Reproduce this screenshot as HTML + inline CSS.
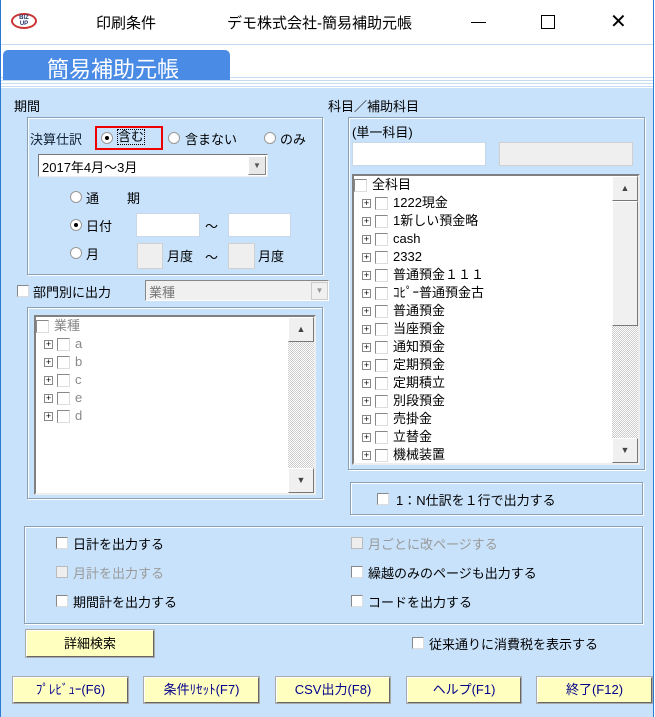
<!DOCTYPE html><html><head><meta charset="utf-8"><style>
*{box-sizing:border-box;margin:0;padding:0}
body{width:655px;height:717px;overflow:hidden;background:#fff;font-family:"Liberation Sans","Noto Sans CJK JP",sans-serif;font-size:13px;color:#000;position:relative}
.a{position:absolute;white-space:nowrap}
.box{position:absolute;border:1px solid #8aa0b4;box-shadow:inset 1px 1px 0 #fff,1px 1px 0 #fff}
.in{position:absolute;background:#fff;border:1px solid #c8d8e8}
.gr{position:absolute;background:#efefef;border:1px solid #d0d0d0}
.cb{position:absolute;width:12px;height:12px;background:#fff;border:1px solid #888;border-right-color:#ddd;border-bottom-color:#ddd}
.rd{position:absolute;width:12px;height:12px;border-radius:50%;background:#fff;border:1px solid #999}
.rd.on::after{content:"";position:absolute;left:3px;top:3px;width:4px;height:4px;border-radius:50%;background:#000}
.list{position:absolute;background:#fff;border:2px solid #808080;border-right-color:#eee;border-bottom-color:#eee;overflow:hidden}
.sb{position:absolute;top:0;bottom:0;width:26px;right:0;background:repeating-conic-gradient(#ccc 0 25%,#fff 0 50%) 0 0/2px 2px}
.btn2{position:absolute;left:0;width:26px;background:#f0f0f0;border:1px solid #fff;border-right-color:#777;border-bottom-color:#777}
.tr{position:absolute;left:0;font-size:13px;height:18px;line-height:18px}
.pl{display:inline-block;width:9px;height:9px;border:1px solid #888;font-size:9px;line-height:7px;text-align:center;vertical-align:middle;margin-left:8px;background:#fff;color:#000}
.sq{display:inline-block;width:13px;height:13px;border:1px solid #888;border-right-color:#ddd;border-bottom-color:#ddd;vertical-align:middle;margin:0 5px 0 4px}
.yb{position:absolute;background:#ffffc0;border:1px solid #fff;border-right-color:#666;border-bottom-color:#666;box-shadow:0 0 0 1px #aaa;text-align:center;font-size:13px;color:#00008b}
</style></head><body>
<div class="a" style="left:0;top:0;width:1px;height:717px;background:#2b7bd6"></div>
<div class="a" style="right:1px;top:0;width:1px;height:717px;background:#2b7bd6"></div>
<div class="a" style="left:11px;top:13px;width:26px;height:16px;border-radius:50%;border:2px solid #c33;font-size:6px;font-weight:bold;color:#236;text-align:center;line-height:6px;padding-top:0">BIZ<br>UP</div>
<div class="a" style="left:96px;top:12px;font-size:15px">印刷条件</div>
<div class="a" style="left:227px;top:12px;font-size:15px">デモ株式会社-簡易補助元帳</div>
<div class="a" style="left:471px;top:22px;width:15px;height:1px;background:#000"></div>
<div class="a" style="left:541px;top:15px;width:14px;height:14px;border:1px solid #000"></div>
<div class="a" style="left:610px;top:13px;font-size:20px;line-height:18px">✕</div>
<div class="a" style="left:1px;top:44px;width:652px;height:1px;background:#c4dcf4"></div>
<div class="a" style="left:1px;top:77px;width:652px;height:11px;background:repeating-linear-gradient(#c4dcf4 0 1px,#fff 1px 3px)"></div>
<div class="a" style="left:3px;top:50px;width:227px;height:30px;background:#4a8be6;border-radius:5px 5px 0 0"></div>
<div class="a" style="left:47px;top:52px;font-size:22px;color:#fff">簡易補助元帳</div>
<div class="a" style="left:1px;top:88px;width:652px;height:629px;background:#c8e2fb"></div>

<div class="a" style="left:14px;top:96px">期間</div>
<div class="box" style="left:27px;top:117px;width:296px;height:158px"></div>
<div class="a" style="left:30px;top:129px;color:#123">決算仕訳</div>
<div class="a" style="left:95px;top:126px;width:68px;height:24px;border:2px solid #e00"></div>
<div class="rd on" style="left:101px;top:132px"></div>
<div class="a" style="left:117px;top:129px;border:1px dotted #000;line-height:14px">含む</div>
<div class="rd" style="left:168px;top:132px"></div><div class="a" style="left:185px;top:129px">含まない</div>
<div class="rd" style="left:264px;top:132px"></div><div class="a" style="left:280px;top:129px">のみ</div>
<div class="a" style="left:38px;top:154px;width:230px;height:23px;background:#fff;border:1px solid #777;border-right-color:#eee;border-bottom-color:#eee;padding:2px 3px;font-size:13px">2017年4月～3月</div>
<div class="a" style="left:248px;top:156px;width:18px;height:19px;background:#e8e8e8;border:1px solid #fff;border-right-color:#888;border-bottom-color:#888;font-size:8px;text-align:center;line-height:17px;color:#555">▼</div>
<div class="rd" style="left:70px;top:191px"></div><div class="a" style="left:86px;top:188px">通</div><div class="a" style="left:127px;top:188px">期</div>
<div class="rd on" style="left:70px;top:219px"></div><div class="a" style="left:86px;top:216px">日付</div>
<div class="in" style="left:136px;top:213px;width:64px;height:24px"></div>
<div class="a" style="left:205px;top:216px">～</div>
<div class="in" style="left:228px;top:213px;width:63px;height:24px"></div>
<div class="rd" style="left:70px;top:247px"></div><div class="a" style="left:86px;top:244px">月</div>
<div class="gr" style="left:137px;top:243px;width:26px;height:26px"></div><div class="a" style="left:167px;top:246px">月度</div>
<div class="a" style="left:205px;top:247px">～</div>
<div class="gr" style="left:228px;top:243px;width:27px;height:26px"></div><div class="a" style="left:258px;top:246px">月度</div>

<div class="cb" style="left:17px;top:285px"></div><div class="a" style="left:33px;top:282px">部門別に出力</div>
<div class="a" style="left:145px;top:280px;width:184px;height:21px;background:#f0f0f0;border:1px solid #888;border-right-color:#fff;border-bottom-color:#fff;color:#777;padding:1px 3px">業種</div>
<div class="a" style="left:311px;top:282px;width:17px;height:18px;border:1px solid #ccc;font-size:8px;color:#999;text-align:center;line-height:16px">▼</div>
<div class="box" style="left:27px;top:307px;width:296px;height:192px"></div>
<div class="list" style="left:34px;top:315px;width:282px;height:180px;color:#888">
<div class="sb"><div class="btn2" style="top:0;height:25px;font-size:9px;text-align:center;line-height:22px;color:#444">▲</div><div class="btn2" style="bottom:0;height:25px;font-size:9px;text-align:center;line-height:22px;color:#444">▼</div></div>
<div class="tr" style="top:0"><span class="sq" style="margin-left:0">&nbsp;</span>業種</div>
<div class="tr" style="top:18px"><span class="pl">+</span><span class="sq"></span>a</div>
<div class="tr" style="top:36px"><span class="pl">+</span><span class="sq"></span>b</div>
<div class="tr" style="top:54px"><span class="pl">+</span><span class="sq"></span>c</div>
<div class="tr" style="top:72px"><span class="pl">+</span><span class="sq"></span>e</div>
<div class="tr" style="top:90px"><span class="pl">+</span><span class="sq"></span>d</div>
</div>

<div class="a" style="left:328px;top:96px">科目／補助科目</div>
<div class="box" style="left:348px;top:117px;width:297px;height:353px"></div>
<div class="a" style="left:352px;top:122px">(単一科目)</div>
<div class="in" style="left:352px;top:142px;width:134px;height:24px"></div>
<div class="gr" style="left:499px;top:142px;width:134px;height:24px"></div>
<div class="list" style="left:352px;top:174px;width:288px;height:291px">
<div class="sb"><div class="btn2" style="top:0;height:25px;font-size:9px;text-align:center;line-height:22px;color:#444">▲</div><div class="btn2" style="top:25px;height:125px"></div><div class="btn2" style="bottom:0;height:25px;font-size:9px;text-align:center;line-height:22px;color:#444">▼</div></div>
<div class="tr" style="top:0"><span class="sq" style="margin-left:0"></span>全科目</div>
<div class="tr" style="top:18px"><span class="pl">+</span><span class="sq"></span>1222現金</div>
<div class="tr" style="top:36px"><span class="pl">+</span><span class="sq"></span>1新しい預金略</div>
<div class="tr" style="top:54px"><span class="pl">+</span><span class="sq"></span>cash</div>
<div class="tr" style="top:72px"><span class="pl">+</span><span class="sq"></span>2332</div>
<div class="tr" style="top:90px"><span class="pl">+</span><span class="sq"></span>普通預金１１１</div>
<div class="tr" style="top:108px"><span class="pl">+</span><span class="sq"></span>ｺﾋﾟｰ普通預金古</div>
<div class="tr" style="top:126px"><span class="pl">+</span><span class="sq"></span>普通預金</div>
<div class="tr" style="top:144px"><span class="pl">+</span><span class="sq"></span>当座預金</div>
<div class="tr" style="top:162px"><span class="pl">+</span><span class="sq"></span>通知預金</div>
<div class="tr" style="top:180px"><span class="pl">+</span><span class="sq"></span>定期預金</div>
<div class="tr" style="top:198px"><span class="pl">+</span><span class="sq"></span>定期積立</div>
<div class="tr" style="top:216px"><span class="pl">+</span><span class="sq"></span>別段預金</div>
<div class="tr" style="top:234px"><span class="pl">+</span><span class="sq"></span>売掛金</div>
<div class="tr" style="top:252px"><span class="pl">+</span><span class="sq"></span>立替金</div>
<div class="tr" style="top:270px"><span class="pl">+</span><span class="sq"></span>機械装置</div>
</div>
<div class="box" style="left:350px;top:482px;width:293px;height:33px"></div>
<div class="cb" style="left:377px;top:493px"></div><div class="a" style="left:396px;top:490px">1：N仕訳を１行で出力する</div>

<div class="box" style="left:24px;top:526px;width:619px;height:98px"></div>
<div class="cb" style="left:56px;top:537px"></div><div class="a" style="left:73px;top:534px">日計を出力する</div>
<div class="cb" style="left:56px;top:566px;background:#eee;border-color:#bbb"></div><div class="a" style="left:73px;top:563px;color:#999">月計を出力する</div>
<div class="cb" style="left:56px;top:595px"></div><div class="a" style="left:73px;top:592px">期間計を出力する</div>
<div class="cb" style="left:351px;top:537px;background:#eee;border-color:#bbb"></div><div class="a" style="left:368px;top:534px;color:#999">月ごとに改ページする</div>
<div class="cb" style="left:351px;top:566px"></div><div class="a" style="left:368px;top:563px">繰越のみのページも出力する</div>
<div class="cb" style="left:351px;top:595px"></div><div class="a" style="left:368px;top:592px">コードを出力する</div>
<div class="yb" style="left:26px;top:630px;width:128px;height:27px;line-height:25px;color:#000">詳細検索</div>
<div class="cb" style="left:412px;top:637px"></div><div class="a" style="left:429px;top:634px">従来通りに消費税を表示する</div>

<div class="yb" style="left:13px;top:677px;width:115px;height:26px;line-height:24px">ﾌﾟﾚﾋﾞｭｰ(F6)</div>
<div class="yb" style="left:144px;top:677px;width:115px;height:26px;line-height:24px">条件ﾘｾｯﾄ(F7)</div>
<div class="yb" style="left:276px;top:677px;width:114px;height:26px;line-height:24px">CSV出力(F8)</div>
<div class="yb" style="left:407px;top:677px;width:114px;height:26px;line-height:24px">ヘルプ(F1)</div>
<div class="yb" style="left:537px;top:677px;width:115px;height:26px;line-height:24px">終了(F12)</div>
</body></html>
